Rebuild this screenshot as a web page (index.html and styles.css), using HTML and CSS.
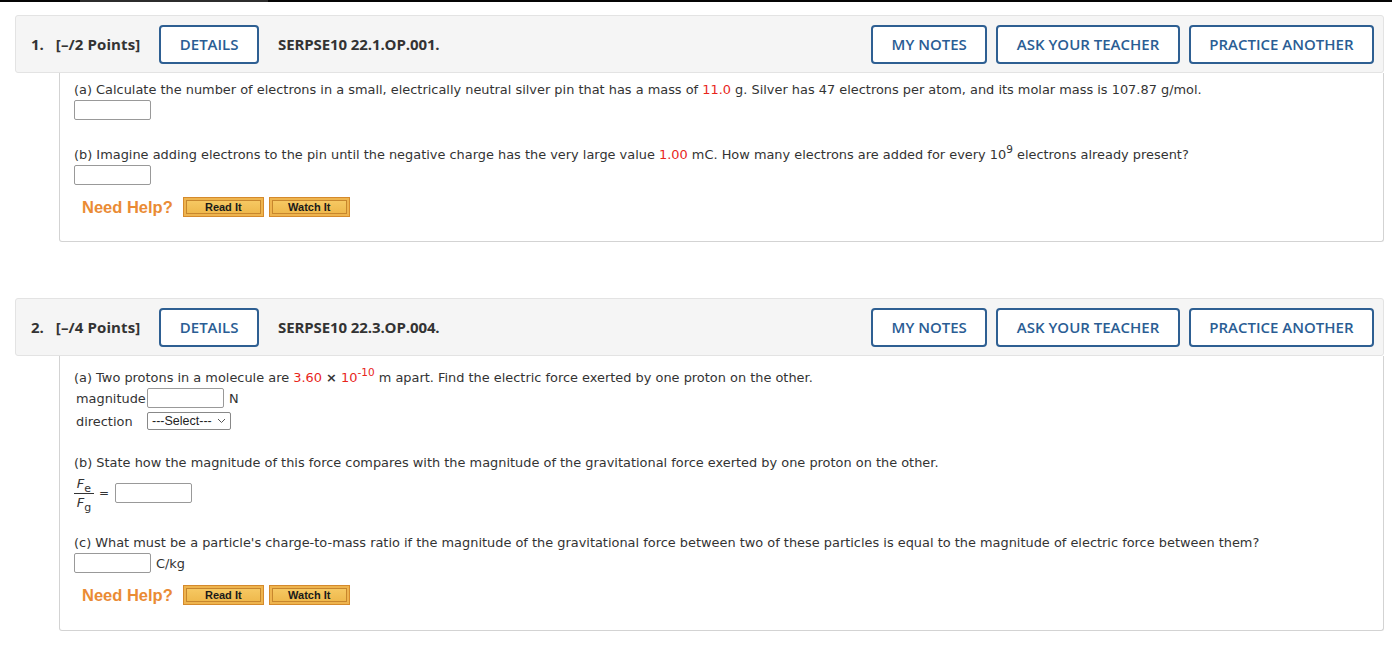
FILE: index.html
```html
<!DOCTYPE html>
<html>
<head>
<meta charset="utf-8">
<link rel="stylesheet" href="styles.css">
</head>
<body>
<div class="topbar"><span class="topseg"></span></div>

<div class="question q1">
  <div class="qhead">
    <span class="qn">1.</span><span class="pts">[–/2 Points]</span>
    <button class="hbtn">DETAILS</button>
    <span class="qid">SERPSE10 22.1.OP.001.</span>
    <span class="spacer"></span>
    <div class="hactions">
      <button class="hbtn">MY NOTES</button>
      <button class="hbtn">ASK YOUR TEACHER</button>
      <button class="hbtn">PRACTICE ANOTHER</button>
    </div>
  </div>
  <div class="qbody">
    <p class="part">(a) Calculate the number of electrons in a small, electrically neutral silver pin that has a mass of <span class="red">11.0</span> g. Silver has 47 electrons per atom, and its molar mass is 107.87 g/mol.</p>
    <div class="row"><span class="ans"></span></div>
    <p class="part gap">(b) Imagine adding electrons to the pin until the negative charge has the very large value <span class="red">1.00</span> mC. How many electrons are added for every 10<sup>9</sup> electrons already present?</p>
    <div class="row"><span class="ans"></span></div>
    <div class="help">
      <span class="helplabel">Need Help?</span>
      <span class="hb"><span class="hbi">Read It</span></span>
      <span class="hb"><span class="hbi">Watch It</span></span>
    </div>
  </div>
</div>

<div class="question q2">
  <div class="qhead">
    <span class="qn">2.</span><span class="pts">[–/4 Points]</span>
    <button class="hbtn">DETAILS</button>
    <span class="qid">SERPSE10 22.3.OP.004.</span>
    <span class="spacer"></span>
    <div class="hactions">
      <button class="hbtn">MY NOTES</button>
      <button class="hbtn">ASK YOUR TEACHER</button>
      <button class="hbtn">PRACTICE ANOTHER</button>
    </div>
  </div>
  <div class="qbody b2">
    <p class="part p2a">(a) Two protons in a molecule are <span class="red">3.60</span> <b class="times">×</b> <span class="red">10<sup>-10</sup></span> m apart. Find the electric force exerted by one proton on the other.</p>
    <div class="frow"><span class="flabel">magnitude</span><span class="ans"></span><span class="unit">N</span></div>
    <div class="frow dir"><span class="flabel">direction</span><span class="sel">---Select---<svg width="9" height="6" viewBox="0 0 9 6"><path d="M1 1 L4.5 4.5 L8 1" fill="none" stroke="#555" stroke-width="1"/></svg></span></div>
    <p class="part p2b">(b) State how the magnitude of this force compares with the magnitude of the gravitational force exerted by one proton on the other.</p>
    <div class="fracrow">
      <span class="frac"><span class="num"><i>F</i><sub>e</sub></span><span class="den"><i>F</i><sub>g</sub></span></span>
      <span class="eq">=</span>
      <span class="ans"></span>
    </div>
    <p class="part p2c">(c) What must be a particle's charge-to-mass ratio if the magnitude of the gravitational force between two of these particles is equal to the magnitude of electric force between them?</p>
    <div class="row"><span class="ans"></span><span class="unit">C/kg</span></div>
    <div class="help">
      <span class="helplabel">Need Help?</span>
      <span class="hb"><span class="hbi">Read It</span></span>
      <span class="hb"><span class="hbi">Watch It</span></span>
    </div>
  </div>
</div>
</body>
</html>
```
FILE: styles.css
```css
html, body {
  margin: 0;
  padding: 0;
  background: #fff;
}
body {
  font-family: "DejaVu Sans", Verdana, sans-serif;
  color: #333;
  width: 1392px;
  height: 662px;
  overflow: hidden;
}
.topbar {
  height: 2px;
  background: #050505;
}
.topseg {
  display: block;
  margin-left: 80px;
  width: 188px;
  height: 2px;
  background: #2c2c2c;
}
.question {
  margin-left: 15px;
  width: 1369px;
}
.q1 { margin-top: 13px; }
.q2 { margin-top: 56px; }
.qhead {
  box-sizing: border-box;
  height: 58px;
  background: #f5f5f5;
  border: 1px solid #e3e3e3;
  border-radius: 3px;
  display: flex;
  align-items: center;
  padding: 0 9px 0 15px;
  font-family: "Open Sans", sans-serif;
  font-weight: 600;
  font-size: 15px;
  color: #333;
}
.qn { margin-right: 12px; font-weight: 700; }
.pts {
  margin-right: 19px;
  font-weight: 700;
  letter-spacing: 0.1px;
}
.qid { margin-left: 19px; font-weight: 700; letter-spacing: -0.1px; }
.spacer { flex: 1; }
.hactions {
  display: flex;
  gap: 9px;
}
.hbtn {
  box-sizing: border-box;
  height: 39px;
  padding: 0 18.5px;
  border: 2px solid #2e5f92;
  border-radius: 4px;
  background: #fff;
  color: #2a5d94;
  font-family: "Open Sans", sans-serif;
  font-weight: 600;
  font-size: 15px;
}
.qbody {
  box-sizing: border-box;
  margin-left: 44px;
  border: 1px solid #d3d3d3;
  border-top: none;
  border-radius: 0 0 3px 3px;
  padding: 9px 14px 0 14px;
  height: 169px;
  font-size: 12.92px;
}
.b2 { height: 275px; padding-top: 14px; }
.part {
  margin: 0;
  line-height: 16px;
  white-space: nowrap;
}
.part sup {
  font-size: 10.5px;
  line-height: 0;
  vertical-align: 6px;
}
.red { color: #e8251b; }
.times { font-weight: bold; }
.gap { margin-top: 27px; }
.row {
  display: flex;
  align-items: center;
  margin-top: 2px;
  height: 20px;
}
.ans {
  display: inline-block;
  box-sizing: border-box;
  width: 77px;
  height: 20px;
  border: 1px solid #999;
  border-radius: 2px;
  background: #fff;
}
.unit { margin-left: 5px; }
.help {
  display: flex;
  align-items: center;
  margin-top: 12px;
  padding-left: 8px;
}
.helplabel {
  font-family: "Liberation Sans", Arial, sans-serif;
  font-weight: bold;
  font-size: 16.5px;
  color: #ea8b34;
  margin-right: 10px;
}
.hb {
  box-sizing: border-box;
  display: inline-flex;
  width: 81px;
  height: 20px;
  padding: 2px;
  margin-right: 5px;
  background: #eeb44e;
  border: 1px solid #d58a2c;
}
.hbi {
  flex: 1;
  display: flex;
  align-items: center;
  justify-content: center;
  border: 1px solid #c7862d;
  background: linear-gradient(#f6c862, #efb94d);
  font-family: "Liberation Sans", Arial, sans-serif;
  font-weight: bold;
  font-size: 11px;
  color: #1a1a1a;
}
.frow {
  display: flex;
  align-items: center;
  height: 20px;
  margin-top: 2px;
  padding-left: 2px;
}
.flabel { width: 71px; }
.frow.dir { margin-top: 4px; height: 18px; }
.sel {
  box-sizing: border-box;
  display: inline-flex;
  align-items: center;
  gap: 5px;
  height: 18px;
  padding: 0 4px 0 4px;
  border: 1px solid #888;
  border-radius: 2px;
  font-family: "Liberation Sans", Arial, sans-serif;
  font-size: 12.5px;
  color: #222;
}
.p2b { margin-top: 25px; }
.fracrow {
  display: flex;
  align-items: center;
  height: 44px;
}
.frac {
  display: inline-flex;
  flex-direction: column;
  align-items: center;
  width: 20px;
}
.frac .num, .frac .den {
  line-height: 18px;
  font-size: 13px;
}
.frac .num { border-bottom: 1px solid #333; width: 100%; text-align: center; }
.frac sub { font-size: 11px; vertical-align: -4px; line-height: 0; }
.eq { margin: 0 6px 0 5px; font-size: 12px; }
.p2c { margin-top: 20px; }
```
